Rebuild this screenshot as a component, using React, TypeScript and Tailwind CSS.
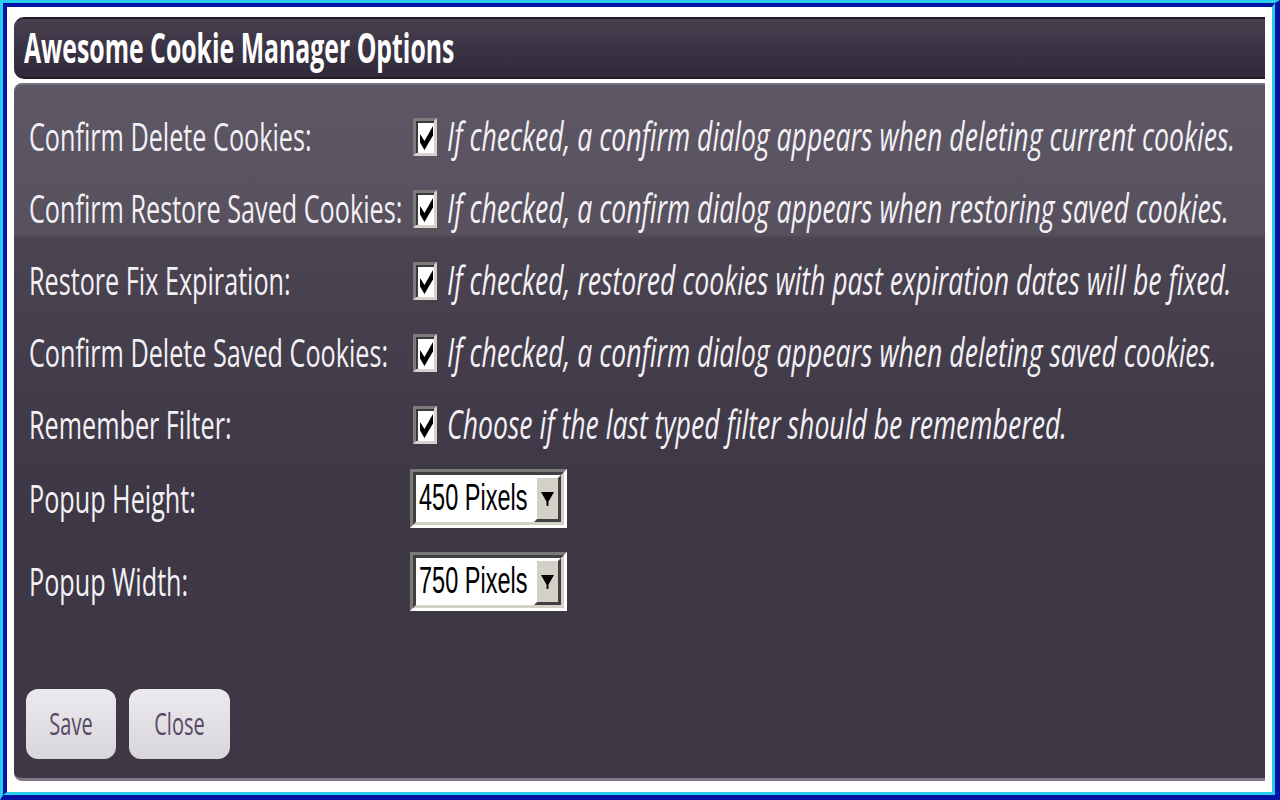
const options = [
  {
    label: "Confirm Delete Cookies:",
    text: "If checked, a confirm dialog appears when deleting current cookies.",
  },
  {
    label: "Confirm Restore Saved Cookies:",
    text: "If checked, a confirm dialog appears when restoring saved cookies.",
  },
  {
    label: "Restore Fix Expiration:",
    text: "If checked, restored cookies with past expiration dates will be fixed.",
  },
  {
    label: "Confirm Delete Saved Cookies:",
    text: "If checked, a confirm dialog appears when deleting saved cookies.",
  },
  {
    label: "Remember Filter:",
    text: "Choose if the last typed filter should be remembered.",
  },
];

const selects = [
  { label: "Popup Height:", value: "450 Pixels" },
  { label: "Popup Width:", value: "750 Pixels" },
];

const CheckBox = () => (
  <div className="w-[24px] h-[38px] shrink-0 border-t-[3px] border-l-[3px] border-t-[#7c7c7c] border-l-[#7c7c7c] border-b-[3px] border-r-[3px] border-b-[#d6d3cc] border-r-[#d6d3cc]">
    <div className="w-full h-full bg-white border-t-[2px] border-l-[2px] border-[#3a3a3a] border-b-0 border-r-0 flex items-center justify-center">
      <svg viewBox="0 0 7 7" preserveAspectRatio="none" className="w-[13px] h-[24px]">
        <polygon points="0,2.3 2.4,4.4 7,0 7,2.8 2.4,7 0,4.8" fill="#000" />
      </svg>
    </div>
  </div>
);

const Select = ({ value }: { value: string }) => (
  <div className="w-[157px] h-[59px] border-t-[3px] border-l-[3px] border-t-[#7a7a7a] border-l-[#7a7a7a] border-b-[3px] border-r-[3px] border-b-white border-r-white">
    <div className="w-full h-full flex border-t-[3px] border-l-[3px] border-t-[#404040] border-l-[#404040] border-b-[3px] border-r-[3px] border-b-[#d4d0c8] border-r-[#d4d0c8] bg-white">
      <div className="flex-1 flex items-center pl-[3px] font-['Liberation_Sans',sans-serif] text-[23.5px] text-black">
        <span className="inline-block scale-y-[1.6]">{value}</span>
      </div>
      <div className="w-[27px] h-full bg-[#d4d0c8] border-t-[3px] border-l-[3px] border-t-white border-l-white border-b-[3px] border-r-[3px] border-b-[#404040] border-r-[#404040] flex items-center justify-center">
        <svg viewBox="0 0 7 5" preserveAspectRatio="none" className="w-[13px] h-[14px]">
          <polygon points="0,0 7,0 4,3.5 4,5 3,5 3,3.5" fill="#000" />
        </svg>
      </div>
    </div>
  </div>
);

const App = () => {
  return (
    <div className="w-[1280px] h-[800px] border-t-[3px] border-l-[3px] border-t-[#2bcdef] border-l-[#2bcdef] border-b-[5px] border-r-[5px] border-b-[#0313a6] border-r-[#0313a6] font-['Open_Sans',sans-serif]">
      <div className="w-full h-full bg-white border-t-[4px] border-l-[4px] border-t-[#0313a6] border-l-[#0313a6] border-b-[3px] border-r-[3px] border-b-[#2bcdef] border-r-[#2bcdef] pt-[10px] pl-[7px] pr-[7px] pb-[11px] flex flex-col gap-[4px]">
        {/* title bar */}
        <div className="h-[62px] shrink-0 rounded-l-[10px] border-t-[2px] border-b-[2px] border-[#221c28] bg-[linear-gradient(to_bottom,#48404f,#2f2839)] flex items-center pl-[10px]">
          <span className="inline-block scale-y-[1.65] text-[24.8px] font-bold text-white">
            Awesome Cookie Manager Options
          </span>
        </div>

        {/* options panel */}
        <div className="flex-1 flex flex-col rounded-l-[8px] border-t-[2px] border-t-[#767080] border-b-[3px] border-b-[#807888] bg-[linear-gradient(to_bottom,#5e5866_0px,#57515e_150px,#4b4552_153px,#423c4a_300px,#3e3846_420px)] pl-[15px] pt-[16px] pb-[19px]">
          {options.map((o) => (
            <div key={o.label} className="h-[72px] flex items-center">
              <div className="w-[384px] shrink-0 text-[#f3f1f5] text-[25.2px]">
                <span className="inline-block scale-y-[1.5]">{o.label}</span>
              </div>
              <CheckBox />
              <div className="ml-[10px] text-[#f3f1f5] text-[26.6px] italic whitespace-nowrap">
                <span className="inline-block scale-y-[1.5]">{o.text}</span>
              </div>
            </div>
          ))}

          <div className="flex flex-col gap-[24px] mt-[8px]">
            {selects.map((s) => (
              <div key={s.label} className="h-[59px] flex items-center">
                <div className="w-[381px] shrink-0 text-[#f3f1f5] text-[25.2px]">
                  <span className="inline-block scale-y-[1.5]">{s.label}</span>
                </div>
                <Select value={s.value} />
              </div>
            ))}
          </div>

          <div className="mt-auto flex gap-[13px] -ml-[3px]">
            <button className="w-[90px] h-[70px] rounded-[12px] bg-[linear-gradient(to_bottom,#eceaee,#d8d5db)] text-[#574a66] text-[20px]">
              <span className="inline-block scale-y-[1.55]">Save</span>
            </button>
            <button className="w-[101px] h-[70px] rounded-[12px] bg-[linear-gradient(to_bottom,#eceaee,#d8d5db)] text-[#574a66] text-[20px]">
              <span className="inline-block scale-y-[1.55]">Close</span>
            </button>
          </div>
        </div>
      </div>
    </div>
  );
};

export default App;
